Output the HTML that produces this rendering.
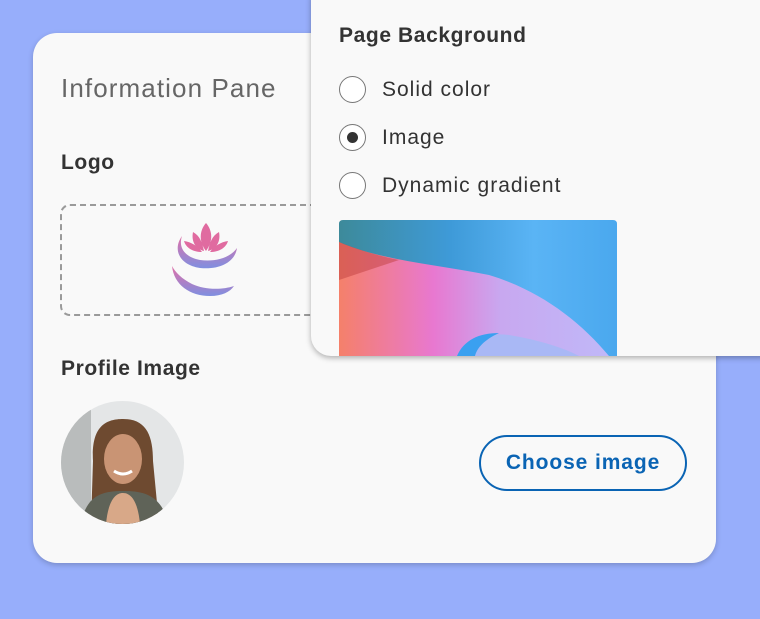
<!DOCTYPE html>
<html><head><meta charset="utf-8"><style>
*{margin:0;padding:0;box-sizing:border-box}
body{width:760px;height:619px;overflow:hidden;background:#97aefb;font-family:"Liberation Sans",sans-serif;position:relative}
.card{position:absolute;left:33px;top:33px;width:683px;height:530px;background:#f9f9f9;border-radius:24px;box-shadow:0 2px 6px rgba(0,0,0,.2)}
.t{position:absolute;color:#333;font-size:21px;letter-spacing:1px}
.b{font-weight:bold;letter-spacing:0.6px;color:#333}
.drop{position:absolute;left:60px;top:204px;width:300px;height:112px;border:2px dashed #9a9a9a;border-radius:10px}
.pop{position:absolute;left:311px;top:-20px;width:470px;height:376px;background:#f9f9f9;border-radius:20px;box-shadow:0 2px 6px rgba(0,0,0,.3)}
.r{position:absolute;left:339px;width:27px;height:27px;border:1.5px solid #777;border-radius:50%;background:#fff}
.btn{position:absolute;left:479px;top:435px;width:208px;height:56px;border:2px solid #0a64b4;border-radius:28px;color:#0a64b4;font-weight:bold;font-size:21px;letter-spacing:0.9px;text-align:center;line-height:52px}
</style></head><body>
<div class="card"></div>
<div class="t" style="left:61px;top:73px;font-size:26px;color:#666;letter-spacing:1.1px">Information Pane</div>
<div class="t b" style="left:61px;top:151px">Logo</div>
<div class="drop"></div>
<svg style="position:absolute;left:160px;top:210px" width="100" height="100" viewBox="0 0 100 100">
<defs><linearGradient id="g" x1="0" y1="0" x2="0" y2="1"><stop offset="0" stop-color="#e070a8"/><stop offset="1" stop-color="#7f8fe0"/></linearGradient></defs>
<path d="M22 26 C12 40 20 55 40 58 C60 60 75 52 77 38 C70 48 55 52 40 50 C25 47 18 38 22 26Z" fill="url(#g)"/>
<path d="M12 56 C14 75 30 86 50 86 C62 86 70 82 74 76 C62 80 45 80 32 74 C22 69 15 62 12 56Z" fill="url(#g)"/>
<path d="M46 13 C39 21 39 32 46 41 C53 32 53 21 46 13Z M33 22 C31 32 36 39 44 41 C42 32 40 26 33 22Z M59 22 C61 32 56 39 48 41 C50 32 52 26 59 22Z M24 31 C26 38 33 42 42 42 C38 36 31 32 24 31Z M68 31 C66 38 59 42 50 42 C54 36 61 32 68 31Z" fill="#e06ba0"/>
</svg>
<div class="t b" style="left:61px;top:357px">Profile Image</div>
<svg style="position:absolute;left:61px;top:401px" width="123" height="123" viewBox="0 0 123 123">
<defs><clipPath id="c"><circle cx="61.5" cy="61.5" r="61.5"/></clipPath></defs>
<g clip-path="url(#c)">
<rect width="123" height="123" fill="#e4e6e7"/>
<rect x="0" y="0" width="30" height="123" fill="#b9bcbc"/>
<path d="M30 123 L32 60 C30 25 45 18 62 18 C85 18 92 34 92 60 L98 123Z" fill="#6e4a30"/>
<ellipse cx="62" cy="58" rx="19" ry="25" fill="#c99474"/>
<path d="M20 123 C25 95 40 90 62 90 C85 90 100 95 108 123Z" fill="#5f6358"/>
<path d="M45 123 C47 102 53 92 62 92 C71 92 77 102 79 123Z" fill="#d8a888"/>
<path d="M53 70 Q62 76 71 70" stroke="#fff" stroke-width="3" fill="none"/>
</g></svg>
<div class="btn">Choose image</div>

<div class="pop"></div>
<div class="t b" style="left:339px;top:24px">Page Background</div>
<div class="r" style="top:76px"></div>
<div class="t" style="left:382px;top:78px">Solid color</div>
<div class="r" style="top:124px"><div style="position:absolute;left:6.5px;top:6.5px;width:11px;height:11px;border-radius:50%;background:#333"></div></div>
<div class="t" style="left:382px;top:126px">Image</div>
<div class="r" style="top:172px"></div>
<div class="t" style="left:382px;top:174px">Dynamic gradient</div>
<svg style="position:absolute;left:339px;top:220px" width="278" height="136" viewBox="0 0 278 136">
<defs>
<clipPath id="ic"><path d="M4 0 H274 Q278 0 278 4 V136 H0 V4 Q0 0 4 0Z"/></clipPath>
<linearGradient id="sky" x1="0" y1="0" x2="1" y2="0"><stop offset="0" stop-color="#3d8a9a"/><stop offset=".4" stop-color="#3e9ad8"/><stop offset=".7" stop-color="#5ab4f5"/><stop offset="1" stop-color="#4aa8ee"/></linearGradient>
<linearGradient id="pk" x1="0" y1="0" x2="1" y2="0"><stop offset="0" stop-color="#f5806a"/><stop offset=".35" stop-color="#e878d0"/><stop offset=".6" stop-color="#c8a8f0"/><stop offset="1" stop-color="#c0b8f8"/></linearGradient>
</defs>
<g clip-path="url(#ic)">
<rect width="278" height="136" fill="url(#sky)"/>
<path d="M0 22 C40 40 100 45 150 55 C200 70 240 100 270 136 H0Z" fill="url(#pk)"/>
<path d="M0 22 C20 30 40 36 60 40 L0 60Z" fill="#c04040" opacity=".5"/>
<path d="M118 136 C125 120 145 112 170 115 C200 120 225 128 240 136Z" fill="#a9b8f5"/>
<path d="M118 136 C125 120 140 113 160 113 C145 120 138 128 136 136Z" fill="#3aa0f0"/>
</g></svg>
</body></html>
